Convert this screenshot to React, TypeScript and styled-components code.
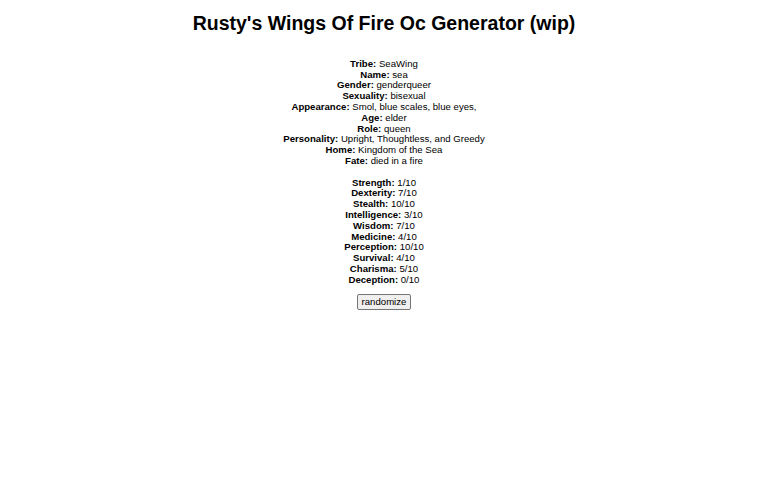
import React, { useState } from 'react'
import styled, { createGlobalStyle } from 'styled-components'

const GlobalStyle = createGlobalStyle`
  body {
    margin: 0;
    background: #ffffff;
    color: #000000;
    font-family: "Liberation Sans", Arial, sans-serif;
  }
`

const Page = styled.main`
  display: flex;
  flex-direction: column;
  align-items: center;
  text-align: center;
  padding-top: 11px;
`

const Title = styled.h1`
  margin: 0 0 23.8px;
  font-size: 19.5px;
  line-height: 24px;
  font-weight: bold;
`

const Block = styled.section<{ $after: number }>`
  font-size: 9.6px;
  line-height: 10.8px;
  margin-bottom: ${p => p.$after}px;
`

const Line = styled.div``

const Label = styled.b`
  font-weight: bold;
`

const Button = styled.button`
  font-family: "Liberation Sans", Arial, sans-serif;
  font-size: 9.6px;
  line-height: 12px;
  padding: 1px 4px;
  color: #000;
  background: #efefef;
  border: 1px solid #767676;
  border-radius: 2px;
`

type Row = [string, string]

const traits: Row[] = [
  ['Tribe', 'SeaWing'],
  ['Name', 'sea'],
  ['Gender', 'genderqueer'],
  ['Sexuality', 'bisexual'],
  ['Appearance', 'Smol, blue scales, blue eyes,'],
  ['Age', 'elder'],
  ['Role', 'queen'],
  ['Personality', 'Upright, Thoughtless, and Greedy'],
  ['Home', 'Kingdom of the Sea'],
  ['Fate', 'died in a fire'],
]

const stats: Row[] = [
  ['Strength', '1/10'],
  ['Dexterity', '7/10'],
  ['Stealth', '10/10'],
  ['Intelligence', '3/10'],
  ['Wisdom', '7/10'],
  ['Medicine', '4/10'],
  ['Perception', '10/10'],
  ['Survival', '4/10'],
  ['Charisma', '5/10'],
  ['Deception', '0/10'],
]

const Rows = ({ rows, after }: { rows: Row[]; after: number }) => (
  <Block $after={after}>
    {rows.map(([k, v]) => (
      <Line key={k}>
        <Label>{k}:</Label> {v}
      </Line>
    ))}
  </Block>
)

const App = () => {
  const [seed, setSeed] = useState(0)
  return (
    <Page key={seed}>
      <GlobalStyle />
      <Title>Rusty's Wings Of Fire Oc Generator (wip)</Title>
      <Rows rows={traits} after={10.8} />
      <Rows rows={stats} after={8.6} />
      <Button onClick={() => setSeed(seed + 1)}>randomize</Button>
    </Page>
  )
}

export default App
